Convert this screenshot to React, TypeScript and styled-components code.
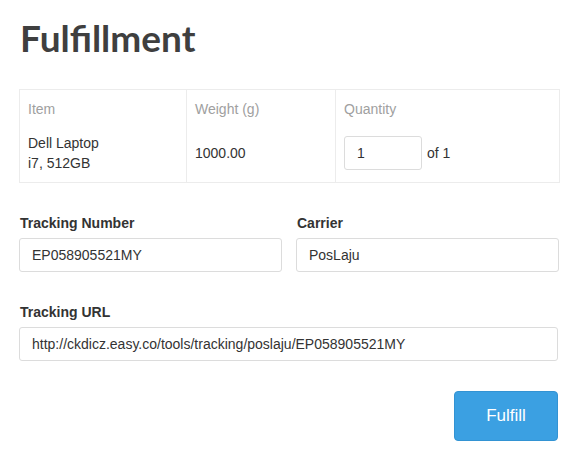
import React from 'react';
import styled, { createGlobalStyle } from 'styled-components';

const GlobalStyle = createGlobalStyle`
  html, body {
    margin: 0;
    padding: 0;
    background: #fff;
  }
  body {
    font-family: "Liberation Sans", Arial, sans-serif;
    font-size: 14px;
    color: #333;
  }
`;

const Page = styled.div`
  width: 581px;
  padding: 0 23px 0 19px;
  box-sizing: border-box;
`;

const Title = styled.h1`
  margin: 0;
  padding: 16px 0 0 1px;
  height: 89px;
  box-sizing: border-box;
  font-family: Lato, "Open Sans", sans-serif;
  font-weight: 700;
  font-size: 37px;
  line-height: 44px;
  color: #3f3f3f;
`;

const Table = styled.table`
  width: 540px;
  border-collapse: collapse;
  border: 1px solid #ececec;
  table-layout: fixed;
`;

const Th = styled.th<{ $w: number }>`
  box-sizing: border-box;
  width: ${(p) => p.$w}px;
  text-align: left;
  font-weight: 400;
  color: #a0a0a0;
  font-size: 14px;
  line-height: 20px;
  padding: 9px 8px 9px 8px;
  border-left: 1px solid #ececec;
`;

const Td = styled.td`
  font-size: 14px;
  line-height: 20px;
  color: #333;
  padding: 5px 8px 9px 8px;
  border-left: 1px solid #ececec;
  vertical-align: middle;
`;

const QtyWrap = styled.div`
  display: flex;
  align-items: center;
  gap: 5px;
`;

const Input = styled.input<{ $w?: number }>`
  box-sizing: border-box;
  width: ${(p) => (p.$w ? `${p.$w}px` : '100%')};
  height: 34px;
  padding: 0 12px;
  border: 1px solid #dcdcdc;
  border-radius: 3px;
  font-family: "Liberation Sans", Arial, sans-serif;
  font-size: 14px;
  color: #333;
  background: #fff;
  outline: none;
`;

const Row = styled.div`
  display: grid;
  grid-template-columns: 263px 263px;
  column-gap: 14px;
  margin-top: 30px;
`;

const Field = styled.div<{ $mt?: number }>`
  display: flex;
  flex-direction: column;
  margin-top: ${(p) => p.$mt ?? 0}px;
`;

const Label = styled.label`
  font-weight: 700;
  font-size: 14px;
  line-height: 20px;
  color: #333;
  padding-left: 1px;
  margin-bottom: 5px;
`;

const Actions = styled.div`
  display: flex;
  justify-content: flex-end;
  margin-top: 30px;
`;

const Button = styled.button`
  width: 104px;
  height: 50px;
  background: #3ba0e2;
  border: 1px solid #3393d3;
  border-radius: 4px;
  color: #fff;
  font-family: "Liberation Sans", Arial, sans-serif;
  font-size: 17px;
  cursor: pointer;
`;

export default function App() {
  return (
    <>
      <GlobalStyle />
      <Page>
        <Title>Fulfillment</Title>
        <Table>
          <thead>
            <tr>
              <Th $w={167}>Item</Th>
              <Th $w={149}>Weight (g)</Th>
              <Th $w={224}>Quantity</Th>
            </tr>
          </thead>
          <tbody>
            <tr>
              <Td>
                Dell Laptop
                <br />
                i7, 512GB
              </Td>
              <Td>1000.00</Td>
              <Td>
                <QtyWrap>
                  <Input $w={78} defaultValue="1" />
                  <span>of 1</span>
                </QtyWrap>
              </Td>
            </tr>
          </tbody>
        </Table>
        <Row>
          <Field>
            <Label>Tracking Number</Label>
            <Input defaultValue="EP058905521MY" />
          </Field>
          <Field>
            <Label>Carrier</Label>
            <Input defaultValue="PosLaju" />
          </Field>
        </Row>
        <Field $mt={30}>
          <Label>Tracking URL</Label>
          <Input defaultValue="http://ckdicz.easy.co/tools/tracking/poslaju/EP058905521MY" />
        </Field>
        <Actions>
          <Button>Fulfill</Button>
        </Actions>
      </Page>
    </>
  );
}
